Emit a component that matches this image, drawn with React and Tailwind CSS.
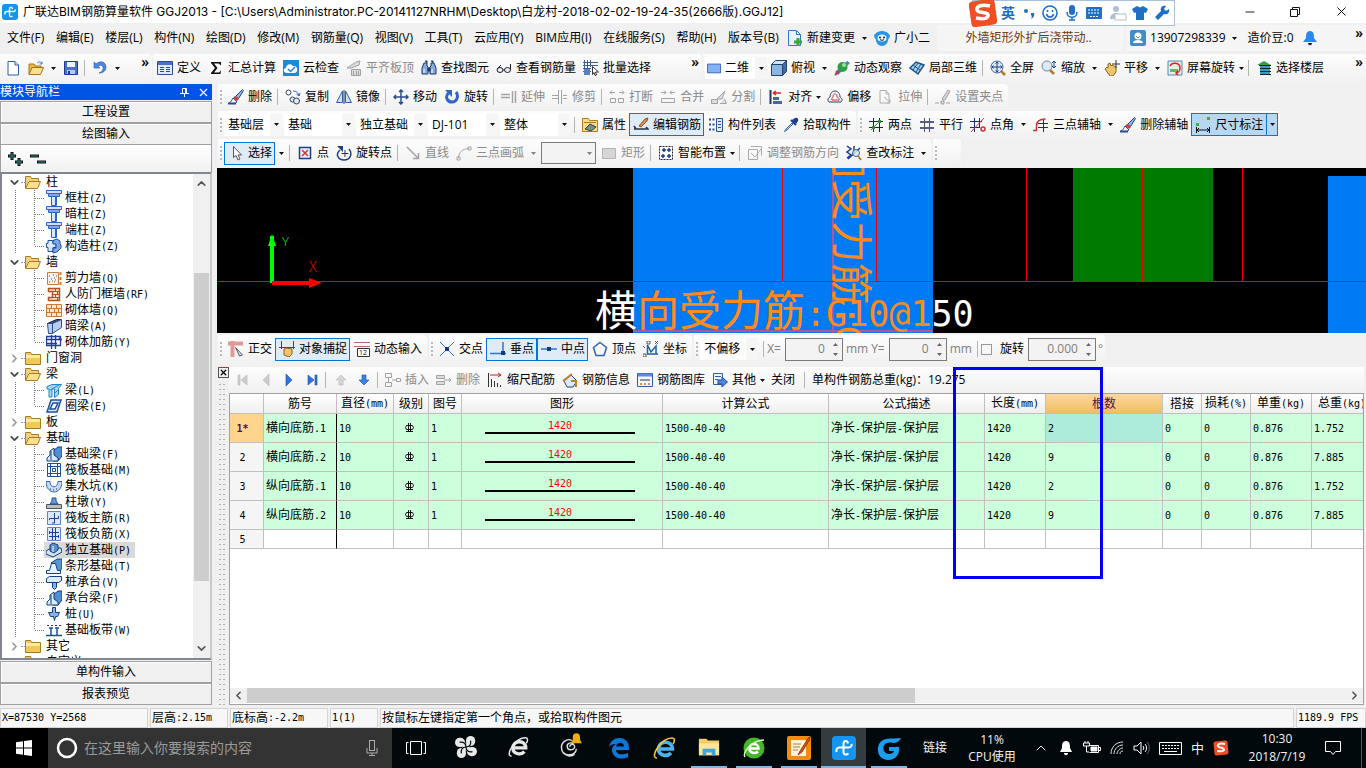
import clsx from "clsx";
import {
  ChevronDown,
  ChevronLeft,
  ChevronRight,
  ChevronUp,
  Minus,
  X,
} from "lucide-react";

const UI = "font-['Open_Sans','Noto_Sans_CJK_SC',sans-serif]";

/* ---------- Icons, all on a 16 x 16 grid ---------- */

const column = (
  <>
    <path d="M.500.500h15v3H.500z" fill="#cfe0fb" stroke="#2f62c4" />
    <path d="M2.500 3.500h11v3h-11z" fill="#7ea6ec" stroke="#2f62c4" />
    <path d="M5.500 6.500h5v9h-5z" fill="#dbe8fd" stroke="#2f62c4" />
    <path d="M9 7h2v8H9z" fill="#2f62c4" />
  </>
);
const beamFoot = (
  <>
    <path d="M7 5l5-4h4v9l-4 5H7z" fill="#4f8fd0" stroke="#123f80" />
    <path d="M1 15v-3l3-3V5l4-3v7l4 3v3z" fill="#dcebfb" stroke="#123f80" />
    <path d="M5 5v9" stroke="#123f80" />
  </>
);
const brush = (
  <>
    <path d="M14.500.500l1 1-5 8-3-2z" fill="#8fb8ea" stroke="#23406f" />
    <path d="M7 7l4 3-2 2-4-3z" fill="#d23b2f" />
    <path d="M1 14c2-1 3-3 4-5l4 4c-2 2-5 2-8 1z" fill="#f4f8ff" stroke="#2b4f8f" />
    <path d="M0 14.500h8" stroke="#2b4f8f" strokeWidth="2" />
  </>
);

const icons = {
  logo: (
    <>
      <rect width="16" height="16" rx="3" fill="#1595f2" />
      <path d="M10.500 5C10 2.500 7.500 2.500 7.500 5v6c0 2 2 2 3 1M3 10.500C2.500 8 3.500 7.500 5 7.500h6.500c1.500 0 2-1 1.500-2" fill="none" stroke="#fff" strokeWidth="1.400" />
    </>
  ),
  file: (
    <>
      <path d="M3 1.500h7l3.500 3.500v10H3z" fill="#fff" stroke="#33609f" />
      <path d="M10 1.500V5h3.500" fill="#cfe0f5" stroke="#33609f" />
    </>
  ),
  open: (
    <>
      <path d="M1 14V4h5l1 2h6v3" fill="#e9b64a" stroke="#a8741a" />
      <path d="M1 14.500l3-7h11.500l-3 7z" fill="#ffdf87" stroke="#a8741a" />
      <path d="M9 3c2-2 4-1 5 1m0 0V1.500M14 4h-2.500" fill="none" stroke="#4c78b8" />
    </>
  ),
  save: (
    <>
      <path d="M1.500 1.500h13v13h-13z" fill="#4b6fd6" stroke="#1d3a9a" />
      <path d="M4 2h8v5H4z" fill="#eaf1ff" />
      <path d="M4 10h8v4H4z" fill="#b9c9ee" />
      <path d="M5 11h2v3H5z" fill="#1d3a9a" />
    </>
  ),
  undo: <path d="M2 2v6h6L6 6c3-2 6 0 5 3-.5 2-2 3-4 4 4 0 7-2 7-6 0-5-6-7-10-3z" fill="#4f86dc" stroke="#2458aa" strokeWidth=".6" />,
  define: (
    <>
      <path d="M.500 1.500h15v13H.500z" fill="#dfe9f8" stroke="#2c4f94" />
      <path d="M1 2h14v3H1z" fill="#4a74c4" />
      <path d="M3 7.500h4M3 9.500h4M3 11.500h4M9 7.500h4M9 9.500h4M9 11.500h4" stroke="#2c4f94" />
    </>
  ),
  sigma: <path d="M3 2h10v3h-1c0-1-1-1.500-2-1.500H6L9.500 8 6 12.500h4c1.500 0 2-.5 2.500-2H13L12.500 14H3v-1l4-5-4-5z" fill="#111" />,
  cloud: (
    <>
      <rect width="16" height="16" fill="#1b8ad8" />
      <path d="M4 13c-4 0-4-5-1-5 0-4 5-5 7-2 5-1 6 7 1 7z" fill="#fff" />
      <path d="M5 9l2.500 2.500L12 7" fill="none" stroke="#1b8ad8" strokeWidth="1.500" />
    </>
  ),
  flatTop: (
    <>
      <path d="M1 8l9-6 4-1-1 4-8 3zM5.500 9.500h9v6h-9z" fill="#dcdcdc" stroke="#a0a0a0" />
      <path d="M7.500 15v-4M10.500 15v-4M12.500 15v-4" stroke="#a0a0a0" />
    </>
  ),
  binoculars: (
    <>
      <path d="M3 3h3v3l1 1v7H1V8zM13 3h-3v3L9 7v7h6V8z" fill="#8aabde" stroke="#1d3666" />
      <path d="M7 8h2v3H7zM4 1h2v2M10 1h2v2" fill="#1d3666" stroke="#1d3666" />
      <path d="M3 9v4M11 9v4" stroke="#fff" />
    </>
  ),
  glasses: (
    <>
      <ellipse cx="4" cy="10" rx="3" ry="2.500" fill="#e6eefb" stroke="#222" />
      <ellipse cx="11.500" cy="10" rx="3" ry="2.500" fill="#e6eefb" stroke="#222" />
      <path d="M7 10h1.500M1 9l4-4M14.500 9V4" stroke="#222" fill="none" />
    </>
  ),
  batch: (
    <>
      <path d="M1.500 0v15M4.500 0v15M7.500 0v7M0 2.500h15M0 5.500h15M0 8.500h8M0 11.500h8" stroke="#3b5f9e" />
      <path d="M1 9h6v6H1z" fill="#5b7fc0" />
      <path d="M9.500 6.500l6 5.500h-3l1 3-1.500.5-1-3-1.500 2z" fill="#fff" stroke="#333" />
    </>
  ),
  rect2d: <path d="M.500 3.500h15v10H.500z" fill="#86b1f5" stroke="#2f5fae" />,
  cube: (
    <>
      <path d="M.500 4.500l4-4h11l-4 4z" fill="#cfe3f8" stroke="#1f4472" />
      <path d="M11.500 4.500l4-4v11l-4 4z" fill="#3b6ea5" stroke="#1f4472" />
      <path d="M.500 4.500h11v11H.500z" fill="#8cb6df" stroke="#1f4472" />
    </>
  ),
  orbit: (
    <>
      <path d="M1 12L13 1l3 2L4 15z" fill="#4b7fc7" />
      <circle cx="8.500" cy="7" r="5" fill="#2e9e45" />
      <circle cx="10" cy="5" r="2" fill="#9fe0a4" />
      <path d="M1 15l4-4" stroke="#c33" strokeWidth="2" />
    </>
  ),
  part3d: (
    <>
      <path d="M1 8l6-6 8 3-6 9z" fill="#a8cce8" stroke="#1f5486" strokeWidth="1.500" />
      <path d="M4 5l7 5M9 3l-5 7M12 4l-5 8" stroke="#1f5486" />
    </>
  ),
  zoomAll: (
    <>
      <path d="M11 11l4 4" stroke="#b37a2a" strokeWidth="2.500" />
      <circle cx="7" cy="7" r="6" fill="#dceafa" stroke="#3f5f8f" />
      <path d="M7 2v10M2 7h10M5.500 3.500L7 2l1.500 1.500M5.500 10.500L7 12l1.500-1.500M3.500 5.500L2 7l1.500 1.500M10.500 5.500L12 7l-1.500 1.500" fill="none" stroke="#1f3f8f" />
    </>
  ),
  zoom: (
    <>
      <path d="M9 10l4 4" stroke="#b37a2a" strokeWidth="2.500" />
      <circle cx="6" cy="6" r="5" fill="#dceafa" stroke="#6a88ad" />
      <path d="M13 1v7M11 3l2-2 2 2M11 6l2 2 2-2" fill="none" stroke="#1f3f8f" />
    </>
  ),
  pan: (
    <>
      <path d="M1 9l2-2 1 1V4l2-1 1 3 1-1 2 1 2 1v5l-3 4H6z" fill="#f0c468" stroke="#8d6420" />
      <path d="M12 0v8M8 4h8" stroke="#333" />
    </>
  ),
  screenRotate: (
    <>
      <path d="M1 1h14v14H1z" fill="#e3f0e2" stroke="#5588bb" />
      <path d="M3 9h8v3H3z" fill="#6cb46c" />
      <path d="M3 6c2-4 10-4 10 2 0 3-2 5-4 5M11 11l-2 2 2 2" fill="none" stroke="#d22" strokeWidth="1.500" />
    </>
  ),
  floors: (
    <>
      <path d="M1 5l7-4 7 4z" fill="#3a9a4a" />
      <path d="M3 5.500h12M4 8.500h11M4 11.500h11M4 14.500h11" stroke="#222" />
      <path d="M4 7h10M4 10h10M4 13h10" stroke="#3f9ac0" strokeWidth="2" />
    </>
  ),
  brush,
  copy: (
    <>
      <circle cx="3.500" cy="3.500" r="2.500" fill="#fff" stroke="#345" />
      <circle cx="7.500" cy="10.500" r="2.500" fill="#dfe9f8" stroke="#345" />
      <circle cx="11.500" cy="12" r="3" fill="#dfe9f8" stroke="#345" />
      <path d="M8 2c3 0 5 1 6 5M11.500 5l2.500 2 1-3" fill="none" stroke="#2f5fae" />
    </>
  ),
  mirror: (
    <>
      <path d="M6.500 2v11.500h-6zM9.500 2v11.500h6z" fill="#cfe0f5" stroke="#2f5fae" />
      <path d="M8 1v14" stroke="#234" />
    </>
  ),
  move: <path d="M8 1v14M1 8h14M6 3l2-2 2 2M6 13l2 2 2-2M3 6L1 8l2 2M13 6l2 2-2 2" fill="none" stroke="#2b4f8f" strokeWidth="1.500" />,
  rotate: (
    <>
      <path d="M4.500 4c-4 4-1 9 3.500 9 5 0 7-6 4-10" fill="none" stroke="#2f66c8" strokeWidth="3" />
      <path d="M1 1h7v7z" fill="#2f66c8" />
    </>
  ),
  extend: <path d="M0 5.500h9M0 8.500h9M11.500 2v12M14.500 2v12" fill="none" stroke="#a3a3a3" strokeWidth="1.500" />,
  trim: <path d="M0 6.500h6M0 9.500h6M6.500 1v14M9.500 1v14M11 6.500h4M11 9.500h4" fill="none" stroke="#a3a3a3" />,
  split: <path d="M1 3.500h5M3 1.500l-2 2 2 2M10 3.500h5M13 1.500l2 2-2 2M1.500 9.500h5v4h-5zM9.500 9.500h5v4h-5z" fill="none" stroke="#a3a3a3" />,
  merge: <path d="M1 3.500h5M4 1.500l2 2-2 2M15 3.500h-5M12 1.500l-2 2 2 2M1.500 9.500h13v4h-13z" fill="none" stroke="#a3a3a3" />,
  divide: <path d="M.500 14.500h6v-4h-6zM9 14.500h6.500l-2-5M6 10l8-8-3 8z" fill="#ddd" stroke="#a3a3a3" />,
  align: (
    <>
      <path d="M2.500 1v14" stroke="#1d3666" strokeWidth="2" />
      <path d="M5 8h6v3H5zM5 12h9v3H5z" fill="#3f66b0" />
      <path d="M13 4H5m0 0l3-2M5 4l3 2" stroke="#d22" fill="none" strokeWidth="1.500" />
    </>
  ),
  offset: (
    <>
      <path d="M2 13c-2-2-1-4 1-5 0-8 10-8 10 0 2 1 3 3 1 5z" fill="#e9eef6" stroke="#345" />
      <path d="M5 11c-1-2 1-2 1-3 0-4 4-4 4 0 0 1 3 1 2 3z" fill="#fff" stroke="#c33" />
    </>
  ),
  stretch: <path d="M2 1.500h6L11 5v9H2zM8 1v4h3M6 8l6 5M12 10v4H9" fill="none" stroke="#b0b0b0" />,
  grip: <path d="M7 10l6-9 2 1-5 9zM0 14h4M6 12h3v3H6zM11 14h4" fill="#d6d6d6" stroke="#a3a3a3" />,
  property: (
    <>
      <path d="M.500 1.500h6l1 2h8v11H.500z" fill="#ffdd85" stroke="#b57a1f" />
      <path d="M2 5.500h12" stroke="#b57a1f" />
      <path d="M3 12l5-5 6 3-5 4z" fill="#7f8f7a" stroke="#23406f" />
    </>
  ),
  editBar: (
    <>
      <path d="M15 1l-3 1-6 7 2 1 6-6z" fill="#e58a4a" stroke="#6b3a1a" strokeWidth=".8" />
      <path d="M1 9l2 3h12l-2-2M1 12h5" fill="none" stroke="#234" strokeWidth="1.500" />
    </>
  ),
  list: (
    <>
      <path d="M1 2.500h2M1 7.500h2M1 12.500h2M4.500 2.500h2M4.500 7.500h2M4.500 12.500h2" stroke="#2b4f8f" strokeWidth="2" />
      <path d="M8.500 1.500h6v13h-6z" fill="#dfe9f8" stroke="#2b4f8f" />
      <path d="M10 4.500h3M10 7.500h3M10 10.500h3" stroke="#2b4f8f" />
    </>
  ),
  picker: (
    <>
      <path d="M9 3l3-2c2-1 4 1 3 3l-2 3z" fill="#1d3f8a" />
      <path d="M8 3l5 5" stroke="#1d3f8a" strokeWidth="2" />
      <path d="M10 7l-6 6-2.500 1.500L3 12l6-6z" fill="#b9d2f2" stroke="#3b66ad" />
    </>
  ),
  axis2: (
    <>
      <path d="M1 4.500h14M1 10.500h14M5.500 1v14M11.500 1v14" stroke="#223" />
      <path d="M3 13L13 3" stroke="#2e8b3a" />
      <path d="M4 9h3v3H4zM10 3h3v3h-3z" fill="#2e8b3a" />
    </>
  ),
  parallel: (
    <>
      <path d="M1 5h14M1 11h14" stroke="#1e2e74" strokeWidth="1.500" />
      <path d="M5.500 1v14M10.500 1v14" stroke="#555" />
    </>
  ),
  pointAngle: (
    <>
      <path d="M0 4.500h12M0 10.500h10M4.500 1v14M9.500 1v10" stroke="#1e2e74" />
      <path d="M1 15L14 1" stroke="#c33" />
      <circle cx="13" cy="12" r="2" fill="none" stroke="#c33" strokeWidth="1.500" />
    </>
  ),
  axis3: (
    <>
      <path d="M5 6.500h10M5 10.500h10M10.500 3v12" stroke="#1e2e74" />
      <path d="M0 13.500h3.500V9c0-4 3-7 9-7" fill="none" stroke="#c33" strokeWidth="1.500" />
    </>
  ),
  dimension: (
    <>
      <path d="M1 6h3v3H1zM12 0h3v3h-3z" fill="#3fae49" />
      <path d="M1.500 10v6M14.500 10v6M2 13h12M4 11l-2 2 2 2M12 11l2 2-2 2" stroke="#111" fill="none" />
    </>
  ),
  cursor: <path d="M5.500 1.500v11l2.500-2 2 4.500 2-1-2-4h3.500z" fill="#fff" stroke="#555" />,
  point: (
    <>
      <path d="M2.500 2.500h11v11h-11z" fill="#eef3fb" stroke="#1d3f8a" strokeWidth="1.500" />
      <path d="M5 5l6 6M11 5l-6 6" stroke="#c33" strokeWidth="1.500" />
    </>
  ),
  rotPoint: (
    <>
      <path d="M4 5c-5 4-2 10 4 10s9-6 5-11" fill="none" stroke="#1d3f8a" strokeWidth="1.500" />
      <path d="M1 1h6v6z" fill="#1d3f8a" />
      <path d="M9 5v7M5.500 8.500h7" stroke="#333" />
    </>
  ),
  line: <path d="M2 2l11 11M13.500 8v5.500H8" fill="none" stroke="#a3a3a3" strokeWidth="1.500" />,
  arc: <path d="M2.500 13C3 7 6 4 13 3.500M1 12h3v3H1zM12 2h3v3h-3z" fill="none" stroke="#a3a3a3" />,
  rectangle: <path d="M1.500 3.500h13v10h-13z" fill="#d6d6d6" stroke="#b5b5b5" />,
  smart: (
    <>
      <path d="M1.500 1.500h13v13h-13z" fill="#fff" stroke="#223" strokeDasharray="2 1" />
      <path d="M6 3v4M4 5h4M11 3v4M9 5h4M5 9v4M3 11h4M11 9v4M9 11h4" stroke="#1d3f8a" strokeWidth="1.500" />
    </>
  ),
  adjust: <path d="M1.500 4.500h9v10h-9zM4 1.500h10.500v9M4 8l4 4 6-8" fill="none" stroke="#ababab" />,
  checkDim: (
    <>
      <path d="M1 1l4 3-4 3 4 3-4 3M8 1v8M2 14l12-11" fill="none" stroke="#1d3f8a" strokeWidth="1.500" />
      <circle cx="10" cy="8" r="3.500" fill="#dceafa" fillOpacity=".8" stroke="#3f5f8f" />
      <path d="M12 11l3 4" stroke="#b37a2a" strokeWidth="2" />
    </>
  ),
  ortho: (
    <>
      <path d="M0 2.500h15M4.500 0v16" stroke="#dd9a98" strokeWidth="4" />
      <path d="M7.500 6.500l7 7.500-3 1z" fill="#dfe6f2" stroke="#556" />
    </>
  ),
  snap: (
    <>
      <path d="M2.500 0v8M14.500 0v8M0 6.500h16" stroke="#7a3030" />
      <path d="M5 8l2-1 6 1v5l-3 3-5-2z" fill="#f0c468" stroke="#8d6420" />
    </>
  ),
  dynInput: (
    <>
      <path d="M0 1.500h16M0 5.500h16" stroke="#b86b6b" />
      <path d="M3.500 7.500h12v8h-12z" fill="#fff" stroke="#333" />
      <text x="5" y="14" fontSize="7" fill="#111">12</text>
    </>
  ),
  cross: (
    <>
      <path d="M1 1l14 14M15 1L1 15" stroke="#2f77c8" />
      <path d="M6 6h4v4H6z" fill="#123a86" />
    </>
  ),
  perp: (
    <>
      <path d="M13 1v11M0 12.500h16" stroke="#2f77c8" strokeWidth="1.500" />
      <path d="M11 10h4v4h-4z" fill="#123a86" />
    </>
  ),
  mid: (
    <>
      <path d="M0 8h16" stroke="#2f77c8" strokeWidth="1.500" />
      <path d="M6 6h4v4H6z" fill="#123a86" />
    </>
  ),
  vertex: <path d="M8 1.500l6.500 5-2.500 8H4l-2.500-8z" fill="none" stroke="#2f66b0" strokeWidth="1.500" />,
  coord: (
    <>
      <path d="M4.500 4v9H15M5 5l3 6 5-6v8" fill="none" stroke="#1d5fa8" strokeWidth="1.500" />
      <path d="M4 0h3v3H4zM12 0l3 3M15 0l-3 3M0 5l2 2M0 13h3v3H0z" fill="none" stroke="#333" strokeWidth=".8" />
    </>
  ),
  insert: <path d="M.500 1.500h6v4h-6zM.500 10.500h6v4h-6zM3.500 6v4M7 8h5M11.500 6.500h4v3h-4z" fill="none" stroke="#a3a3a3" />,
  remove: <path d="M.500 3.500h8v3h-8zM.500 9.500h8v3h-8zM8 8h7m0 0l-2-2m2 2l-2 2" fill="#ddd" stroke="#a3a3a3" />,
  scaleBar: (
    <>
      <path d="M1.500 1v14M4.500 7v8M7.500 9v6M10.500 11v4M13.500 13v2" stroke="#333" />
      <path d="M3 3h11m0 0l-3-2m3 2l-3 2" stroke="#b22" fill="none" />
    </>
  ),
  barInfo: (
    <>
      <path d="M2 9l7-6 6 6-4 6H5z" fill="#dfe9f8" stroke="#23406f" />
      <path d="M1 9l9-7M9 9h5v6" stroke="#b9822c" strokeWidth="2" fill="none" />
    </>
  ),
  barLib: (
    <>
      <path d="M.500 1.500h15v13H.500z" fill="#f1f6fd" stroke="#2c5fa8" />
      <path d="M1 3h14" stroke="#5b8fd6" strokeWidth="3" />
      <path d="M3 8h10" stroke="#333" />
      <path d="M3 12h10" stroke="#c93" strokeWidth="2" strokeDasharray="2 2" />
    </>
  ),
  other: (
    <>
      <path d="M1.500 1.500h9v11h-9z" fill="#eef3fb" stroke="#2c5fa8" />
      <path d="M3 4.500h6M3 7.500h3" stroke="#2c5fa8" />
      <path d="M6 8h4V5l5.500 5-5.500 5v-3H6z" fill="#4f86dc" stroke="#1d4f9a" />
    </>
  ),
  first: <path d="M3 3h2v10H3zM12 3v10L6 8z" fill="#cdcdcd" stroke="#b5b5b5" strokeWidth=".6" />,
  prev: <path d="M11 2v12L5 8z" fill="#cdcdcd" stroke="#b5b5b5" strokeWidth=".6" />,
  next: <path d="M5 2v12l6-6z" fill="#2f74e0" stroke="#1d4f9a" strokeWidth=".6" />,
  last: <path d="M4 3v10l6-5zM11 3h2v10h-2z" fill="#2f74e0" stroke="#1d4f9a" strokeWidth=".6" />,
  up: <path d="M8 3l5 5h-3v5H6V8H3z" fill="#d6d6d6" stroke="#b5b5b5" strokeWidth=".6" />,
  down: <path d="M8 13L3 8h3V3h4v5h3z" fill="#3f7fe6" stroke="#1d4f9a" strokeWidth=".6" />,
  change: (
    <>
      <path d="M1.500.500h8l4 4v11h-12z" fill="#e9f3ff" stroke="#2f77c8" />
      <path d="M9.500 1v3.500H13" fill="none" stroke="#2f77c8" />
      <path d="M11 8v8M7 12h8" stroke="#3ca63c" strokeWidth="3" />
    </>
  ),
  mascot: (
    <>
      <path d="M8 1c6 0 7 4 8 4 0 3-2 4-2 5 0 3-3 6-6 6s-6-3-6-6C2 9 0 8 0 5c1 0 2-4 8-4z" fill="#2a93e8" />
      <ellipse cx="8" cy="8" rx="4.500" ry="3.500" fill="#e6f4ff" />
      <circle cx="6" cy="7.500" r="1" fill="#124" />
      <circle cx="10" cy="7.500" r="1" fill="#124" />
      <path d="M6 9.500c1 1 3 1 4 0" fill="none" stroke="#124" />
    </>
  ),
  user: (
    <>
      <rect width="16" height="16" rx="2" fill="#3f8fc6" />
      <circle cx="8" cy="6" r="3.500" fill="#fff" />
      <path d="M3 13c0-4 10-4 10 0z" fill="#fff" />
      <path d="M6 6l2 2 2-2" stroke="#3f8fc6" fill="none" />
    </>
  ),
  bell: (
    <>
      <path d="M8 1c4 0 4 4 4 7l3 4H1l3-4c0-3 0-7 4-7z" fill="#2b88f0" />
      <path d="M6 13h4c0 3-4 3-4 0z" fill="#123" />
    </>
  ),
  // navigation tree
  folder: (
    <>
      <path d="M.500 2.500h5l1 2h9v10H.500z" fill="#f3c75a" stroke="#a87c22" />
      <path d="M1 6.500h14" stroke="#ffe9a8" strokeWidth="3" />
    </>
  ),
  folderOpen: (
    <>
      <path d="M.500 14V2.500h5l1 2h7V8" fill="#f0d078" stroke="#a87c22" />
      <path d="M.500 14.500L4 7.500h11.500l-3 7z" fill="#ffe08a" stroke="#a87c22" />
    </>
  ),
  column,
  structColumn: (
    <>
      <path d="M2 2.500h5v3h3v4H7v4H2v-4H.500v-4H2z" fill="#dbe8fd" stroke="#1d4fa0" />
      <path d="M7 2.500L11 1l3 2v3l1 1v3l-4 4-4 1v-5h3v-4H7z" fill="#7ea6ec" stroke="#1d4fa0" />
    </>
  ),
  shearWall: (
    <>
      <path d="M1.500 2.500h11v12h-11z" fill="#f6f1ec" stroke="#c97a3a" />
      <path d="M3 6h1M7 5h1M5 9h1M9 10h1M3 12h1M8 12h1M10 6h1M6 11h1M8 8h1" stroke="#555" />
      <path d="M14.500 2v3M14.500 7v3M14.500 12v3" stroke="#c97a3a" strokeWidth="2" />
    </>
  ),
  doorWall: (
    <>
      <path d="M2.500 2.500h11v12h-11v-3h4v-6h-4z" fill="#fbe3cf" stroke="#b4521f" strokeWidth="1.500" />
      <path d="M7 5.500h6M7 8.500h6M7 11.500h6M9.500 3v2M11.500 6v2M9.500 9v2M11.500 12v2" stroke="#b4521f" />
    </>
  ),
  brick: (
    <>
      <path d="M.500 2.500h15v12H.500z" fill="#fce6d2" stroke="#c97a3a" />
      <path d="M1 6.500h14M1 10.500h14M5.500 3v3M10.500 3v3M3.500 7v3M8.500 7v3M12.500 7v3M5.500 11v3M10.500 11v3" stroke="#c97a3a" />
    </>
  ),
  hiddenBeam: (
    <>
      <path d="M1.500 5.500l9-4h5l-9 4z" fill="#36527c" stroke="#223" />
      <path d="M1.500 5.500h5v10h-4zM6.500 5.500l9-4v8l-9 6z" fill="#b9cdec" stroke="#2c4f94" />
    </>
  ),
  brickBar: <path d="M0 5.500h16M0 9.500h11M5.500 1v14M9.500 1v14M.500 2.500h14v9H.500zM12 6l3-3" fill="none" stroke="#1d3f9a" strokeWidth="1.300" />,
  beam: (
    <>
      <path d="M1 4.500l5-2h9.500l-3 4v6l-4 3V7H6v8H3V7H1z" fill="#a8d4f5" stroke="#2186c8" />
      <path d="M4 8l9-5M8 12l5-5" stroke="#2186c8" />
    </>
  ),
  ringBeam: <path d="M5 2h10l-4 12H1zM7 5h5l-3 6H4z" fill="#dbe8fb" fillRule="evenodd" stroke="#1d4fa0" strokeWidth="1.500" />,
  beamFoot,
  raft: <path d="M1.500 1.500h13v13h-13zM4.500 1v14M11.500 1v14M1 4.500h14M1 11.500h14M6.500 6.500h3v3h-3z" fill="none" stroke="#1d4fa0" />,
  pit: (
    <>
      <path d="M0 3.500h4c0 7 8 7 8 0h4c0 14-16 14-16 0z" fill="#c5dbf7" stroke="#2f66b8" />
      <path d="M4 11h1M7 12h1M10 11h1" stroke="#123" />
    </>
  ),
  pier: (
    <>
      <path d="M.500 10.500h15v4H.500z" fill="#b9bec3" stroke="#555" />
      <path d="M4 10l2-3V4h4v3l2 3z" fill="#6f97dd" stroke="#1d4fa0" />
    </>
  ),
  raftMain: (
    <>
      <path d="M1.500 1.500h13v13h-13z" fill="#dbe8fb" stroke="#5b86cf" />
      <path d="M8.500 3v10H6M3.500 10V8.500h9V6" fill="none" stroke="#1d3f9a" />
    </>
  ),
  raftNeg: (
    <>
      <path d="M1.500 1.500h13v13h-13z" fill="#dbe8fb" stroke="#5b86cf" />
      <path d="M6.500 2v12M9.500 2v12M3 6.500h10M3 10.500h10M3.500 5v3M12.500 9v3" stroke="#1d3f9a" />
    </>
  ),
  footing: (
    <>
      <path d="M0 9l5-3 10 0 1 4-9 5-7-3z" fill="#cfe3f8" stroke="#123f80" />
      <path d="M4 9V3l3-2 5 2v5l-4 3z" fill="#5d8fcb" stroke="#123f80" />
      <path d="M7 4v6" stroke="#fff" />
    </>
  ),
  strip: (
    <>
      <path d="M5 5l6-4h5v9l-3 5z" fill="#5d94cf" stroke="#123f80" />
      <path d="M.500 15.500v-3h3l2-7h4l2 7h3v3z" fill="#e9f2fc" stroke="#123f80" />
    </>
  ),
  pileCap: (
    <>
      <path d="M6.500 8.500h4v5l-2 2-2-2z" fill="#7fb2e8" stroke="#123f80" />
      <path d="M.500 4.500l3-2h12v4l-3 2H.500z" fill="#dcebfb" stroke="#123f80" />
    </>
  ),
  pile: <path d="M6.500 1.500h3v5h4l-2 4h-2l-1 4-1-4h-3l-2-4h4z" fill="#8db4e6" stroke="#123f80" />,
  band: (
    <>
      <path d="M1 3.500h14" stroke="#333" strokeDasharray="2 2" />
      <path d="M0 13.500h16M5 6v7M11 6v7M3 6h4M9 6h4" stroke="#1d4fa0" strokeWidth="1.500" />
    </>
  ),
};

function Icon({ name, className = "h-4 w-4" }) {
  return (
    <svg viewBox="0 0 16 16" className={clsx("shrink-0", className)} aria-hidden="true">
      {icons[name]}
    </svg>
  );
}

/* ---------- Toolbar parts ---------- */

function Caret({ dim }) {
  return (
    <svg viewBox="0 0 5 3" className={clsx("h-[3px] w-[5px] shrink-0", dim && "opacity-50")} aria-hidden="true">
      <path d="M0 0h5L2.500 3z" fill="#111" />
    </svg>
  );
}

const Sep = () => <span className="mx-[2px] h-4 w-[2px] shrink-0 border-l border-[#b4b4b4]" />;

const Grip = () => (
  <span className="flex w-1.5 shrink-0 flex-col items-center gap-[2px] self-center">
    {[0, 1, 2, 3].map((i) => (
      <i key={i} className="h-[2px] w-[2px] bg-[#b8b8b8]" />
    ))}
  </span>
);

const More = () => (
  <button type="button" aria-label="More" className="ml-auto self-start pr-px text-[14px] leading-4 font-semibold">
    »
  </button>
);

function Bar({ children, className, grip = true }) {
  return (
    <div
      className={clsx(
        "flex h-full shrink-0 items-center rounded-r bg-gradient-to-b from-[#fdfdfd] to-[#f1f1f1] pr-0.5",
        className
      )}
    >
      {grip && <Grip />}
      {children}
    </div>
  );
}

/* caret: "split" has its own button, "menu" belongs to the label */
function Tool({ icon, label, active, disabled, caret }) {
  return (
    <>
      <button
        type="button"
        disabled={disabled}
        className={clsx(
          "flex h-[23px] shrink-0 items-center gap-1 pr-[3px] pl-1 whitespace-nowrap",
          active && "bg-[#dfebf6] outline -outline-offset-1 outline-[#0078d7]",
          disabled && "text-[#8a8a8a]"
        )}
      >
        {icon && <Icon name={icon} />}
        <span>{label}</span>
        {caret === "menu" && (
          <span className="flex w-1 justify-center">
            <Caret />
          </span>
        )}
      </button>
      {caret === "split" && (
        <button
          type="button"
          disabled={disabled}
          aria-label={`${label} options`}
          className="flex h-[23px] w-3 shrink-0 items-center justify-center"
        >
          <Caret dim={disabled} />
        </button>
      )}
    </>
  );
}

function Combo({ label, value, className, boxed, icon }) {
  return (
    <div
      className={clsx(
        "relative flex h-[22px] shrink-0 items-center",
        boxed ? "border border-[#7a7a7a] bg-[#f3f3f3]" : "bg-white",
        className
      )}
    >
      {icon && <Icon name={icon} className="ml-[2px] h-4 w-3.5" />}
      <select aria-label={label} className="h-full w-full min-w-0 appearance-none bg-transparent pl-1 outline-none">
        <option>{value}</option>
      </select>
      <span
        className={clsx(
          "pointer-events-none absolute top-0 right-0 flex h-full w-3 items-center justify-center",
          !boxed && "bg-[#f6f6f6]"
        )}
      >
        <Caret dim={boxed} />
      </span>
    </div>
  );
}

function Spin({ label, value, className }) {
  return (
    <div className={clsx("flex h-[23px] shrink-0 items-center border border-[#7a7a7a] bg-[#f3f3f3] pr-1", className)}>
      <input
        aria-label={label}
        defaultValue={value}
        className="w-full min-w-0 bg-transparent pr-2 text-right text-[#808080] outline-none"
      />
      <svg viewBox="0 0 5 15" className="h-[15px] w-[5px] shrink-0" aria-hidden="true">
        <path d="M0 4h5L2.500 1zM0 11h5l-2.500 3z" fill="#666" />
      </svg>
    </div>
  );
}

/* Latin characters take half the width of a Chinese one in panels and grids */
function Fixed({ children }) {
  return String(children)
    .split(/([\x20-\x7e]+)/)
    .filter(Boolean)
    .map((part, i) =>
      /^[\x20-\x7e]/.test(part) ? (
        <span key={i} className="font-['DejaVu_Sans_Mono',monospace] text-[10px] whitespace-pre">
          {part}
        </span>
      ) : (
        part
      )
    );
}

/* ---------- Title and menu ---------- */

function TitleBar() {
  return (
    <header className="flex h-[23px] shrink-0 items-center bg-white pl-0.5">
      <Icon name="logo" />
      <h1 className="ml-[5px] font-['Inter','Noto_Sans_CJK_SC',sans-serif] whitespace-nowrap">
        广联达BIM钢筋算量软件 GGJ2013 - [C:\Users\Administrator.PC-20141127NRHM\Desktop\白龙村-2018-02-02-19-24-35(2666版).GGJ12]
      </h1>
      <div className="ml-auto flex h-full items-center">
        <button type="button" aria-label="Minimize" className="flex w-[45px] justify-center">
          <Minus size={14} strokeWidth={1.5} />
        </button>
        <button type="button" aria-label="Restore" className="flex w-[45px] justify-center">
          <svg viewBox="0 0 10 10" className="h-2.5 w-2.5" fill="none" stroke="#111">
            <path d="M.5 2.500h7v7h-7zM2.500 2.500v-2h7v7h-2" />
          </svg>
        </button>
        <button type="button" aria-label="Close" className="flex w-[49px] justify-center">
          <X size={15} strokeWidth={1.5} />
        </button>
      </div>
    </header>
  );
}

function InputMethodBar() {
  return (
    <div className="absolute top-0 right-[191px] flex h-[26px] w-[203px] items-center justify-between border border-[#a9bfdc] bg-white pr-1 pl-[28px] text-[#1f6fc4]">
      <svg viewBox="0 0 28 28" className="absolute -top-0.5 -left-1 h-7 w-7" aria-hidden="true">
        <rect x="1" y="1" width="26" height="26" rx="4" fill="#f04e23" transform="rotate(-8 14 14)" />
        <path d="M21 7C13 5 7 7 8 11c1 4 12 1 11 6-1 3-7 3-12 2" fill="none" stroke="#fff" strokeWidth="3.500" />
      </svg>
      <b className="text-[14px]">英</b>
      <svg viewBox="0 0 16 16" className="h-4 w-4">
        <circle cx="5" cy="6" r="2" fill="currentColor" />
        <path d="M10 8h3c1 3-1 5-3 6 1-2 1-3 0-4z" fill="currentColor" />
      </svg>
      <svg viewBox="0 0 16 16" className="h-4 w-4" fill="none" stroke="currentColor" strokeWidth="1.600">
        <circle cx="8" cy="8" r="7" />
        <path d="M4.500 9c1 4 6 4 7 0M5.500 5v2M10.500 5v2" />
      </svg>
      <svg viewBox="0 0 16 16" className="h-4 w-4">
        <rect x="5" y="0" width="6" height="10" rx="3" fill="currentColor" />
        <path d="M3 7c0 7 10 7 10 0M8 12v3M5 15h6" fill="none" stroke="currentColor" strokeWidth="1.500" />
      </svg>
      <svg viewBox="0 0 18 16" className="h-4 w-[18px]">
        <rect x="1" y="2" width="16" height="12" rx="1" fill="currentColor" />
        <path d="M3 5h12M3 8h12M5 11.500h8" stroke="#fff" strokeDasharray="2 1" />
      </svg>
      <svg viewBox="0 0 18 16" className="h-4 w-[18px] text-[#b0bfd2]">
        <circle cx="7" cy="4" r="3" fill="currentColor" />
        <path d="M1 14c0-8 12-8 12 0z" fill="currentColor" />
        <rect x="6" y="9" width="11" height="6" fill="#fff" stroke="currentColor" />
      </svg>
      <svg viewBox="0 0 16 16" className="h-4 w-4">
        <path d="M5 1l3 1.500L11 1l5 3-2 4-2-.5V15H4V7.500L2 8 0 4z" fill="currentColor" />
      </svg>
      <svg viewBox="0 0 16 16" className="h-4 w-4">
        <path d="M15 4l-3 2-2-2 2-3c-4-1-6 2-5 5l-6 6 3 3 6-6c3 1 6-1 5-5z" fill="currentColor" />
      </svg>
    </div>
  );
}

const menus = [
  "文件(F)", "编辑(E)", "楼层(L)", "构件(N)", "绘图(D)", "修改(M)", "钢筋量(Q)",
  "视图(V)", "工具(T)", "云应用(Y)", "BIM应用(I)", "在线服务(S)", "帮助(H)", "版本号(B)",
];

function MenuBar() {
  return (
    <nav className="flex h-[30px] shrink-0 items-center whitespace-nowrap">
      <div className="flex w-[783px] shrink-0 justify-between pr-1 pl-[7px]">
        {menus.map((m) => (
          <button key={m} type="button">
            {m}
          </button>
        ))}
      </div>
      <Tool icon="change" label="新建变更" caret="split" />
      <Tool icon="mascot" label="广小二" />
      <a href="#news" className="ml-1 flex h-[26px] w-[187px] items-center justify-center rounded bg-[#f5f5f5] pr-1 text-[#6b3a10]">
        外墙矩形外扩后浇带动..
      </a>
      <div className="ml-[2px] flex h-[26px] flex-1 items-center bg-[#f5f5f5] pr-0.5">
        <Tool icon="user" label="13907298339" caret="split" />
        <span className="ml-[7px]">造价豆:0</span>
        <button type="button" aria-label="Notifications" className="ml-2">
          <Icon name="bell" />
        </button>
        <More />
      </div>
    </nav>
  );
}

function MainToolbar() {
  return (
    <div className="flex h-[29px] shrink-0 items-center gap-[1px] pt-px">
      <Bar grip={false} className="w-[152px] pl-px">
        {["file", "open", "caret", "save", "sep", "undo", "caret"].map((n, i) => {
          if (n === "sep") return <Sep key={i} />;
          return (
            <button
              key={i}
              type="button"
              aria-label={n}
              className={clsx("flex h-[23px] shrink-0 items-center justify-center", n === "caret" ? "w-3" : "w-[23px]")}
            >
              {n === "caret" ? <Caret /> : <Icon name={n} />}
            </button>
          );
        })}
        <More />
      </Bar>
      <Bar grip={false} className="w-[549px]">
        <Tool icon="define" label="定义" />
        <Tool icon="sigma" label="汇总计算" />
        <Tool icon="cloud" label="云检查" />
        <Tool icon="flatTop" label="平齐板顶" disabled />
        <Tool icon="binoculars" label="查找图元" />
        <Tool icon="glasses" label="查看钢筋量" />
        <Tool icon="batch" label="批量选择" />
        <More />
      </Bar>
      <Bar grip={false} className="flex-1 pl-[2px]">
        <Combo label="View" icon="rect2d" value="二维" className="w-[62px]" />
        <Tool icon="cube" label="俯视" caret="split" />
        <Tool icon="orbit" label="动态观察" />
        <Tool icon="part3d" label="局部三维" />
        <Sep />
        <Tool icon="zoomAll" label="全屏" />
        <Tool icon="zoom" label="缩放" caret="split" />
        <Tool icon="pan" label="平移" caret="split" />
        <Tool icon="screenRotate" label="屏幕旋转" caret="menu" />
        <Sep />
        <Tool icon="floors" label="选择楼层" />
        <More />
      </Bar>
    </div>
  );
}

/* ---------- Left navigation ---------- */

const tree = [
  { label: "柱", open: true, items: [["框柱(Z)", "column"], ["暗柱(Z)", "column"], ["端柱(Z)", "column"], ["构造柱(Z)", "structColumn"]] },
  {
    label: "墙",
    open: true,
    items: [["剪力墙(Q)", "shearWall"], ["人防门框墙(RF)", "doorWall"], ["砌体墙(Q)", "brick"], ["暗梁(A)", "hiddenBeam"], ["砌体加筋(Y)", "brickBar"]],
  },
  { label: "门窗洞" },
  { label: "梁", open: true, items: [["梁(L)", "beam"], ["圈梁(E)", "ringBeam"]] },
  { label: "板" },
  {
    label: "基础",
    open: true,
    items: [
      ["基础梁(F)", "beamFoot"], ["筏板基础(M)", "raft"], ["集水坑(K)", "pit"], ["柱墩(Y)", "pier"],
      ["筏板主筋(R)", "raftMain"], ["筏板负筋(X)", "raftNeg"], ["独立基础(P)", "footing"], ["条形基础(T)", "strip"],
      ["桩承台(V)", "pileCap"], ["承台梁(F)", "beamFoot"], ["桩(U)", "pile"], ["基础板带(W)", "band"],
    ],
  },
  { label: "其它" },
  { label: "自定义" },
];
const selected = "独立基础(P)";

function TreeGroup({ group }) {
  const items = group.items || [];
  const Chevron = group.open ? ChevronDown : ChevronRight;
  return (
    <li>
      <button type="button" className="flex h-4 items-center pl-[5px]">
        <Chevron size={13} strokeWidth={3} className={group.open ? "text-[#444]" : "text-[#999]"} />
        <span className="w-1 border-b border-dotted border-[#999]" />
        <Icon name={group.open ? "folderOpen" : "folder"} />
        <span className="ml-[5px]">{group.label}</span>
      </button>
      <ul>
        {items.map(([label, icon], i) => (
          <li key={label} className="flex h-4 items-center">
            <svg viewBox="0 0 41 16" className="h-4 w-[41px] shrink-0" stroke="#777" strokeDasharray="1 1" aria-hidden="true">
              <path d={`M12.500 0v16M31.500 0v${i === items.length - 1 ? 8 : 16}M32 8.500h9`} />
            </svg>
            <button type="button" className={clsx("flex h-4 items-center pr-1 pl-0.5", label === selected && "bg-[#d9d9d9]")}>
              <Icon name={icon} />
              <span className="ml-[3px] leading-4">
                <Fixed>{label}</Fixed>
              </span>
            </button>
          </li>
        ))}
      </ul>
    </li>
  );
}

function PanelButton({ children }) {
  return (
    <button type="button" className="h-[22px] w-full shrink-0 border border-[#a0a0a0] bg-[#f0f0f0] shadow-[inset_1px_1px_0_#fff]">
      {children}
    </button>
  );
}

function Navigator() {
  return (
    <aside className="flex w-[212px] shrink-0 flex-col pb-[2px]">
      <div className="flex h-4 shrink-0 items-center bg-[#0054e3] text-white">
        <h2 className="text-[12px]">模块导航栏</h2>
        <button type="button" aria-label="Pin" className="mr-2 ml-auto">
          <svg viewBox="0 0 9 9" className="h-[9px] w-[9px]" fill="none" stroke="#fff">
            <path d="M2.500 5V.5h4V5M5.500 1v4M0 5.500h9M4.500 6v3" />
          </svg>
        </button>
        <button type="button" aria-label="Close panel" className="mr-[2px]">
          <X size={13} strokeWidth={2} />
        </button>
      </div>
      <div className="mt-px flex flex-col">
        <PanelButton>工程设置</PanelButton>
        <PanelButton>绘图输入</PanelButton>
      </div>
      <div className="flex h-[27px] shrink-0 items-center gap-1 border-x border-[#a0a0a0] bg-gradient-to-b from-white to-[#f1f1f1] pl-1.5">
        <button type="button" aria-label="Expand all">
          <svg viewBox="0 0 18 16" className="h-4 w-[18px]">
            <path d="M5 1v8M1 5h8M12 7v8M8 11h8" stroke="#111" strokeWidth="3" />
            <path d="M5 2v6M2 5h6M12 8v6M9 11h6" stroke="#1c8f7e" />
          </svg>
        </button>
        <button type="button" aria-label="Collapse all">
          <svg viewBox="0 0 18 16" className="h-4 w-[18px]">
            <path d="M1 5h9M8 11h9" stroke="#111" strokeWidth="3" />
            <path d="M2 5h7M9 11h7" stroke="#1c8f7e" />
          </svg>
        </button>
      </div>
      <div className="flex min-h-0 flex-1 border-2 border-[#82878f] border-r-[#c9c9c9] bg-white">
        <ul className="min-w-0 flex-1 overflow-hidden pl-px">
          {tree.map((g) => (
            <TreeGroup key={g.label} group={g} />
          ))}
        </ul>
        <div className="flex w-[17px] shrink-0 flex-col items-center bg-[#f0f0f0]">
          <ChevronUp size={13} strokeWidth={3} className="my-[3px] text-[#555]" />
          <div className="mt-20 h-[308px] w-[15px] bg-[#cdcdcd]" />
          <ChevronDown size={13} strokeWidth={3} className="mt-auto mb-[3px] text-[#555]" />
        </div>
      </div>
      <div className="mt-px flex flex-col">
        <PanelButton>单构件输入</PanelButton>
        <PanelButton>报表预览</PanelButton>
      </div>
    </aside>
  );
}

/* ---------- Drawing toolbars ---------- */

function EditToolbars() {
  return (
    <div className="flex shrink-0 flex-col pl-px">
      <div className="flex h-[26px] shrink-0">
        <Bar>
          <Tool icon="brush" label="删除" />
          <Sep />
          <Tool icon="copy" label="复制" />
          <Tool icon="mirror" label="镜像" />
          <Sep />
          <Tool icon="move" label="移动" />
          <Tool icon="rotate" label="旋转" />
          <Sep />
          <Tool icon="extend" label="延伸" disabled />
          <Tool icon="trim" label="修剪" disabled />
          <Sep />
          <Tool icon="split" label="打断" disabled />
          <Tool icon="merge" label="合并" disabled />
          <Tool icon="divide" label="分割" disabled />
          <Sep />
          <Tool icon="align" label="对齐" caret="menu" />
          <Tool icon="offset" label="偏移" />
          <Tool icon="stretch" label="拉伸" disabled />
          <Sep />
          <Tool icon="grip" label="设置夹点" disabled />
        </Bar>
      </div>
      <div className="flex h-7 shrink-0 gap-[2px] pt-px">
        <Bar>
          <Combo label="Floor" value="基础层" className="mr-[2px] w-[58px]" />
          <Combo label="Category" value="基础" className="mr-[2px] w-[70px]" />
          <Combo label="Type" value="独立基础" className="mr-[2px] w-[70px]" />
          <Combo label="Component" value="DJ-101" className="mr-[2px] w-[70px]" />
          <Combo label="Unit" value="整体" className="mr-[2px] w-[70px]" />
          <Sep />
          <Tool icon="property" label="属性" />
          <Tool icon="editBar" label="编辑钢筋" active />
          <Tool icon="list" label="构件列表" />
          <Tool icon="picker" label="拾取构件" />
        </Bar>
        <Bar>
          <Tool icon="axis2" label="两点" />
          <Tool icon="parallel" label="平行" />
          <Tool icon="pointAngle" label="点角" caret="split" />
          <Tool icon="axis3" label="三点辅轴" caret="split" />
          <Tool icon="brush" label="删除辅轴" />
          <div className="flex bg-[#b8d8f2] outline -outline-offset-1 outline-[#0078d7]">
            <button type="button" className="flex h-[23px] items-center gap-1 pr-[3px] pl-1">
              <Icon name="dimension" />
              <span>尺寸标注</span>
            </button>
            <button type="button" aria-label="尺寸标注 options" className="flex w-3 items-center justify-center border-l border-[#0078d7]">
              <Caret />
            </button>
          </div>
        </Bar>
      </div>
      <div className="flex h-[30px] shrink-0 gap-[2px] py-px">
        <Bar>
          <Tool icon="cursor" label="选择" active caret="split" />
          <Sep />
          <Tool icon="point" label="点" />
          <Tool icon="rotPoint" label="旋转点" />
          <Sep />
          <Tool icon="line" label="直线" disabled />
          <Tool icon="arc" label="三点画弧" disabled caret="split" />
          <Combo label="Radius" value="" boxed className="mr-px ml-0.5 w-[55px]" />
          <Tool icon="rectangle" label="矩形" disabled />
          <Sep />
          <Tool icon="smart" label="智能布置" caret="menu" />
          <Sep />
          <Tool icon="adjust" label="调整钢筋方向" disabled />
          <Tool icon="checkDim" label="查改标注" caret="split" />
        </Bar>
        <Bar className="w-7">{null}</Bar>
      </div>
    </div>
  );
}

function Canvas() {
  return (
    <svg className="block h-[165px] w-full shrink-0 bg-black" role="img" aria-label="Plan view">
      <rect x="416" width="300" height="165" fill="#007af5" />
      <rect x="856" width="140" height="113" fill="#007a00" />
      <rect x="1111" y="8" width="100%" height="157" fill="#007af5" />
      <path d="M616 0v165M416 163h300" stroke="#b0569f" strokeWidth="2" />
      <path d="M565.500 0v113M659.500 0v113M809.500 0v113M925.500 0v113M1025.500 0v113" stroke="#f00000" />
      <line x1="0" x2="100%" y1="113.500" y2="113.500" stroke="#f00000" />

      <path d="M53 68h4v47h-4zM51 78l4-12 4 12z" fill="#0f0" />
      <path d="M55 113h37v4H55zM92 110l13 5-13 5z" fill="#f00" />
      <text x="65" y="78" fontSize="13" fill="#0f0" className="font-['Open_Sans',sans-serif] font-light">Y</text>
      <text x="92" y="104" fontSize="14" fill="#f00" className="font-['Open_Sans',sans-serif] font-light">X</text>

      <g fill="#ff8a1c" className="font-['Noto_Sans_CJK_SC',sans-serif]">
        <text transform="translate(619 -31) rotate(90)" fontSize="42">
          向受力筋
          <tspan fontSize="35" className="font-['DejaVu_Sans_Mono',monospace]">:G10@150</tspan>
        </text>
        <text x="378" y="158" fontSize="42">
          <tspan fill="#fff">横</tspan>向受力筋
          <tspan fontSize="35" className="font-['DejaVu_Sans_Mono',monospace]">:G10@1<tspan fill="#fff">50</tspan></tspan>
        </text>
      </g>
    </svg>
  );
}

function SnapToolbar() {
  return (
    <div className="flex h-8 shrink-0 gap-[2px] py-[2px] pl-px">
      <Bar>
        <Tool icon="ortho" label="正交" />
        <Tool icon="snap" label="对象捕捉" active />
        <Tool icon="dynInput" label="动态输入" />
      </Bar>
      <Bar>
        <Tool icon="cross" label="交点" />
        <Tool icon="perp" label="垂点" active />
        <Tool icon="mid" label="中点" active />
        <Tool icon="vertex" label="顶点" />
        <Tool icon="coord" label="坐标" />
      </Bar>
      <Bar className="text-[#808080]">
        <Combo label="Offset" value="不偏移" className="mr-[3px] w-[58px] text-black" />
        <Sep />
        <span className="mr-1">X=</span>
        <Spin label="X" value="0" className="w-[58px]" />
        <span className="mx-[3px]">mm</span>
        <span className="mr-1">Y=</span>
        <Spin label="Y" value="0" className="w-[58px]" />
        <span className="mx-[3px]">mm</span>
        <Sep />
        <label className="flex items-center gap-2 text-black">
          <input type="checkbox" className="h-[11px] w-[11px] appearance-none border border-[#999] bg-[#f6f6f6]" />
          旋转
        </label>
        <Spin label="Angle" value="0.000" className="mr-[2px] ml-1 w-[68px]" />
        <span>°</span>
      </Bar>
    </div>
  );
}

/* ---------- Rebar table ---------- */

const columns = [
  ["", "w-[34px]"], ["筋号", "w-[73px]"], ["直径(mm)", "w-[57px]"], ["级别", "w-[35px]"], ["图号", "w-[33px]"],
  ["图形", "w-[201px]"], ["计算公式", "w-[166px]"], ["公式描述", "w-[156px]"], ["长度(mm)", "w-[61px]"],
  ["根数", "w-[117px]"], ["搭接", "w-[39px]"], ["损耗(%)", "w-[49px]"], ["单重(kg)", "w-[61px]"], ["总重(kg)", "w-[61px]"],
];

const rebars = [
  { name: "横向底筋.1", count: 2, total: "1.752" },
  { name: "横向底筋.2", count: 9, total: "7.885" },
  { name: "纵向底筋.1", count: 2, total: "1.752" },
  { name: "纵向底筋.2", count: 9, total: "7.885" },
];

const line = "border-r border-b border-[#c0c0c0]";
const cell = clsx(line, "py-0 pr-0 pl-[2px]");

const GradeMark = () => (
  <svg viewBox="0 0 9 10" className="mx-auto h-2.5 w-[9px]" fill="none" stroke="#111" aria-hidden="true">
    <path d="M3.500 0v9M5.500 0v9M1.500 2.500h6l1 2-1 2h-6l-1-2zM1 8.500h7" />
  </svg>
);

function RebarTable() {
  return (
    <table className="w-[1143px] table-fixed border-separate border-spacing-0 whitespace-nowrap">
      <thead>
        <tr className="h-5">
          {columns.map(([title, width], i) => (
            <th
              key={i}
              scope="col"
              className={clsx(
                line,
                "p-0 font-normal",
                width,
                title === "根数"
                  ? "bg-gradient-to-b from-[#fbd8a0] to-[#f0be5c] text-[#5a0a50]"
                  : "bg-gradient-to-b from-white to-[#efefef]"
              )}
            >
              <Fixed>{title}</Fixed>
            </th>
          ))}
        </tr>
      </thead>
      <tbody>
        {rebars.map((r, i) => (
          <tr key={r.name} className="h-[29px] bg-[#ccffdb]">
            <th
              scope="row"
              className={clsx(line, "p-0 pr-2", i === 0 ? "bg-[#ffd48c] text-[#5a0a50]" : "bg-[#f5f5f5] font-normal")}
            >
              <Fixed>{i === 0 ? "1*" : i + 1}</Fixed>
            </th>
            <td className="border-r border-b border-r-black border-b-[#c0c0c0] py-0 pr-0 pl-[2px]"><Fixed>{r.name}</Fixed></td>
            <td className={cell}><Fixed>10</Fixed></td>
            <td className={clsx(line, "p-0 pr-1")}><GradeMark /></td>
            <td className={cell}><Fixed>1</Fixed></td>
            <td className={clsx(line, "p-0 pr-1 pb-1")}>
              <div className="mx-auto w-[150px] border-b-2 border-black text-center leading-3 text-[#f00]">
                <Fixed>1420</Fixed>
              </div>
            </td>
            <td className={cell}><Fixed>1500-40-40</Fixed></td>
            <td className={cell}><Fixed>净长-保护层-保护层</Fixed></td>
            <td className={cell}><Fixed>1420</Fixed></td>
            <td className={clsx(cell, i === 0 && "bg-[#adebdb]")}><Fixed>{r.count}</Fixed></td>
            <td className={cell}><Fixed>0</Fixed></td>
            <td className={cell}><Fixed>0</Fixed></td>
            <td className={cell}><Fixed>0.876</Fixed></td>
            <td className={cell}><Fixed>{r.total}</Fixed></td>
          </tr>
        ))}
        <tr className="h-[19px]">
          <th scope="row" className={clsx(line, "bg-[#f5f5f5] p-0 pr-2 font-normal")}>
            <Fixed>5</Fixed>
          </th>
          {columns.slice(1).map(([title]) => (
            <td key={title} className={clsx("border-r border-b border-b-[#c0c0c0] p-0", title === "筋号" ? "border-r-black" : "border-r-[#c0c0c0]")} />
          ))}
        </tr>
      </tbody>
    </table>
  );
}

function RebarPanel() {
  return (
    <section className="relative flex min-h-0 flex-1 pt-[2px] pb-0.5">
      <div className="flex w-3 shrink-0 flex-col items-start">
        <button type="button" aria-label="Close editor" className="ml-px h-[11px] w-[11px] shrink-0 border border-[#555] border-t-[#b33]">
          <X size={9} strokeWidth={3.5} />
        </button>
        <div className="mt-1 ml-px w-2 flex-1 bg-[radial-gradient(circle,#b0b0b0_1px,transparent_1px)] bg-[length:4px_5px]" />
      </div>
      <div className="flex min-w-0 flex-1 flex-col pr-[2px]">
        <div className="flex h-[26px] shrink-0 items-center bg-gradient-to-b from-[#fdfdfd] to-[#f1f1f1] pl-[2px]">
          {["first", "prev", "next", "last", "sep", "up", "down", "sep2"].map((n) =>
            n.startsWith("sep") ? (
              <Sep key={n} />
            ) : (
              <button key={n} type="button" aria-label={n} className="flex w-[23px] shrink-0 justify-center">
                <Icon name={n} />
              </button>
            )
          )}
          <Tool icon="insert" label="插入" disabled />
          <Tool icon="remove" label="删除" disabled />
          <Tool icon="scaleBar" label="缩尺配筋" />
          <Tool icon="barInfo" label="钢筋信息" />
          <Tool icon="barLib" label="钢筋图库" />
          <Tool icon="other" label="其他" caret="menu" />
          <Tool label="关闭" />
          <div className="flex items-center gap-1 pl-1 whitespace-nowrap">
            <Sep />
            单构件钢筋总重(kg)：19.275
          </div>
        </div>
        <div className="flex min-h-0 flex-1 flex-col border border-[#a0a0a0] bg-white">
          <div className="min-h-0 flex-1 overflow-hidden">
            <RebarTable />
          </div>
          <div className="mb-px flex h-[15px] shrink-0 items-center bg-[#f0f0f0]">
            <ChevronLeft size={13} strokeWidth={3} className="mx-[2px] shrink-0 text-[#555]" />
            <div className="h-full w-[59%] bg-[#cdcdcd]" />
            <ChevronRight size={13} strokeWidth={3} className="mr-[2px] ml-auto shrink-0 text-[#555]" />
          </div>
        </div>
      </div>
      <div className="pointer-events-none absolute top-[2px] left-[736px] h-[212px] w-[150px] border-3 border-[#0000fa]" />
    </section>
  );
}

/* ---------- Status bar and taskbar ---------- */

function StatusBar() {
  const box = "flex h-full shrink-0 items-center border border-[#d4d4d4] bg-[#f7f7f7] pl-px";
  return (
    <footer className="flex h-5 shrink-0 gap-[2px] whitespace-pre">
      <span className={clsx(box, "w-[148px]")}><Fixed>X=87530 Y=2568</Fixed></span>
      <span className={clsx(box, "w-[78px]")}><Fixed>层高:2.15m</Fixed></span>
      <span className={clsx(box, "w-[98px]")}><Fixed>底标高:-2.2m</Fixed></span>
      <span className={clsx(box, "w-[48px]")}><Fixed>1(1)</Fixed></span>
      <span className={clsx(box, "flex-1")}>按鼠标左键指定第一个角点，或拾取构件图元</span>
      <span className={clsx(box, "w-[70px]")}><Fixed>1189.9 FPS</Fixed></span>
    </footer>
  );
}

const ieMark = (ring, fill) => (
  <>
    <path d="M6.500 13h14c0-9-14-9-14 0 0 7 9 8 12.500 4" fill="none" stroke={fill} strokeWidth="3.600" />
    <path d="M5 22C-3 22 9 2 20 2c3 0 3 3 1 6" fill="none" stroke={ring} strokeWidth="1.600" />
  </>
);

const apps = [
  {
    name: "Pinwheel",
    art: (
      <>
        <g fill="#e8e8e8">
          <rect x="0" y="2" width="11" height="10" rx="5" />
          <rect x="12" y="0" width="10" height="11" rx="5" />
          <rect x="13" y="12" width="11" height="10" rx="5" />
          <rect x="2" y="13" width="10" height="11" rx="5" />
          <circle cx="12" cy="12" r="4" />
        </g>
        <path d="M12 12C12 8 9 6 5 7M12 12c4 0 6-3 5-7M12 12c0 4 3 6 7 5M12 12c-4 0-6 3-5 7" fill="none" stroke="#02090d" strokeWidth="1.300" />
      </>
    ),
  },
  { name: "Browser", art: ieMark("#e8e8e8", "#e8e8e8") },
  {
    name: "Alerts",
    art: (
      <>
        <path d="M16 9c-2-3-8-1-7 3 1 5 9 3 8-1-1-3-6-2-5 1M19 14c-1 8-14 9-16 1C1 7 9 2 14 5M17 20c-4 3-10 2-12-2" fill="none" stroke="#e0e0e0" strokeWidth="1.500" />
        <path d="M19-3c4 0 4 3 4 7l2 4H13l2-4c0-4 0-7 4-7z" fill="#f0ad10" />
      </>
    ),
  },
  {
    name: "Edge",
    art: (
      <path
        d="M2 11C4-1 22-1 22 12v2H9c0 5 7 5 12 3v4C13 25 5 21 5 14c0-3 2-5 4-6-4 0-6 1-7 3zM9 10.500h8c0-5-7-5-8 0z"
        fill="#0a78d7"
        fillRule="evenodd"
      />
    ),
  },
  { name: "Internet Explorer", art: ieMark("#f6c62c", "#4db2ee") },
  {
    name: "Explorer",
    run: true,
    art: (
      <>
        <path d="M1 3h8l2 2h12v16H1z" fill="#f3ce66" />
        <path d="M1 8h22v13H1z" fill="#ffe596" />
        <path d="M5 21v-7h14v7h-4v-3H9v3z" fill="#3aa5e8" />
      </>
    ),
  },
  {
    name: "360",
    run: true,
    art: (
      <>
        <circle cx="12" cy="12" r="10.500" fill="#45b52c" />
        <path d="M7.500 12.500h9c0-6-9-6-9 0 0 5 6 5.500 8.500 3" fill="none" stroke="#fff" strokeWidth="2.600" />
        <path d="M3 21C0 16 11 4 22 4" fill="none" stroke="#d6f7bf" strokeWidth="1.500" />
      </>
    ),
  },
  {
    name: "Notes",
    run: true,
    art: (
      <>
        <rect x="0" y="0" width="24" height="24" rx="2" fill="#f58a10" />
        <path d="M4 4h15v16H4z" fill="#fff3d8" />
        <path d="M6 8h8M6 11h7M6 14h5" stroke="#b97a3a" />
        <path d="M22 1l-9 14-2 4 4-3 8-13z" fill="#d8551a" stroke="#7a2b0a" strokeWidth=".8" />
      </>
    ),
  },
  {
    name: "GGJ2013",
    run: true,
    current: true,
    art: (
      <>
        <rect width="24" height="24" rx="4" fill="#1595f2" />
        <path d="M16 7.500C15.500 4 11.500 4 11.500 8v8c0 3 3 3 5 1.500M4.500 16C4 13 5 11.500 7.500 11.500h9c2.500 0 3.500-1.500 3-3.500" fill="none" stroke="#fff" strokeWidth="2" />
      </>
    ),
  },
  {
    name: "Glodon",
    run: true,
    art: <path d="M24 2c-2 4-5 5-8 5-8-2-11 3-9 8 2 4 9 4 10 0h-5v-4h10c1 8-4 13-11 13C2 24-1 15 2 8 6 1 15 3 24 2z" fill="#1a9ff0" />,
  },
];

function Taskbar() {
  return (
    <div className="flex h-10 shrink-0 items-center bg-[#02090d] text-[#f2f2f2]">
      <button type="button" aria-label="Start" className="flex h-full w-12 shrink-0 items-center justify-center bg-black">
        <svg viewBox="0 0 16 16" className="h-4 w-4" fill="#fff">
          <path d="M0 2.300L7 1.300v6.200H0zM8 1.100L16 0v7.500H8zM0 8.500h7v6.200L0 13.700zM8 8.500h8V16l-8-1.100z" />
        </svg>
      </button>
      <label className="flex h-full w-[344px] shrink-0 items-center bg-[#333] pr-3.5 pl-2">
        <svg viewBox="0 0 22 22" className="h-[22px] w-[22px] shrink-0" fill="none" stroke="#fff" strokeWidth="2.500">
          <circle cx="11" cy="11" r="9" />
        </svg>
        <input
          aria-label="Search"
          placeholder="在这里输入你要搜索的内容"
          className="ml-1.5 min-w-0 flex-1 bg-transparent text-[14px] outline-none placeholder:text-[#9a9a9a]"
        />
        <svg viewBox="0 0 12 16" className="h-4 w-3" fill="none" stroke="#aaa">
          <rect x="3.500" y=".5" width="5" height="10" />
          <path d="M1 8v5h10V8M6 13v3M3 15.500h6" />
        </svg>
      </label>
      <button type="button" aria-label="Task view" className="flex w-12 shrink-0 justify-center">
        <svg viewBox="0 0 20 16" className="h-4 w-5" fill="none" stroke="#fff">
          <path d="M4.500 1.500h11v13h-11zM2.500 2.500h-2v11h2M17.500 2.500h2v11h-2" />
        </svg>
      </button>
      {apps.map((a, i) => (
        <button
          key={a.name}
          type="button"
          aria-label={a.name}
          className={clsx(
            "flex h-full shrink-0 flex-col items-center justify-between pt-2",
            i < 3 ? "w-[52px]" : "w-[45px]",
            a.current && "bg-[#343c40]"
          )}
        >
          <svg viewBox="0 0 24 24" className={clsx("overflow-visible", i < 3 || a.name === "Explorer" ? "h-[22px] w-[22px]" : "h-6 w-6")}>
            {a.art}
          </svg>
          <span className={clsx("h-[2px]", a.current ? "w-full" : "w-9", a.run && "bg-[#76b9ed]")} />
        </button>
      ))}
      <span className="ml-3 shrink-0">链接</span>
      <div className="ml-5 w-[50px] shrink-0 text-center leading-[17px] whitespace-nowrap">
        <p>11%</p>
        <p>CPU使用</p>
      </div>
      <div className="ml-auto flex shrink-0 items-center">
        <div className="flex w-[196px] items-center justify-between">
          <ChevronUp size={16} strokeWidth={1.500} />
          <svg viewBox="0 0 16 16" className="h-4 w-4" fill="#fff">
            <path d="M8 1c4 0 4 4 4 7l2 4H2l2-4c0-3 0-7 4-7zM6 13h4c0 3-4 3-4 0z" />
          </svg>
          <svg viewBox="0 0 18 14" className="h-3.5 w-[18px]" fill="none" stroke="#fff">
            <path d="M5.500 4.500h10v7h-9M16 6.500h1.500v3H16M.500 2h6v3h-6zM2 0v2M5 0v2M3.500 5v6H6" />
            <path d="M8 6h6v4H8z" fill="#fff" />
          </svg>
          <svg viewBox="0 0 14 14" className="h-3.5 w-3.5" fill="none" stroke="#ddd">
            <path d="M1 13C1 6 6 1 13 1M4 13c0-5 4-9 9-9M7 13c0-3 3-6 6-6M10 13c0-2 1-3 3-3" />
          </svg>
          <svg viewBox="0 0 17 14" className="h-3.5 w-[17px]" fill="none" stroke="#fff">
            <path d="M1 5h3l4-4v12L4 9H1zM10 5c1 1 1 3 0 4M12 3c2 2 2 6 0 8" />
            <path d="M14 1c3 3 3 9 0 12" stroke="#666" />
          </svg>
          <svg viewBox="0 0 23 13" className="h-[13px] w-[23px]" fill="none" stroke="#fff">
            <path d="M.500.500h22v12H.500z" />
            <path d="M3 3.500h17M3 6.500h17" strokeDasharray="2 1" />
            <path d="M5 9.500h13" />
          </svg>
          <span className="text-[13px]">中</span>
          <svg viewBox="0 0 16 16" className="h-4 w-4">
            <rect x="1" y="1" width="14" height="14" rx="2" fill="#f04e23" transform="rotate(-6 8 8)" />
            <path d="M12 4c-4-1-8 0-7 2 0 2 6 1 6 4-1 2-4 1-7 1" fill="none" stroke="#fff" strokeWidth="2" />
          </svg>
        </div>
        <div className="ml-3 w-[72px] text-center leading-[18px]">
          <p>10:30</p>
          <p>2018/7/19</p>
        </div>
        <button type="button" aria-label="Action center" className="mr-5 ml-3 flex w-4 justify-center">
          <svg viewBox="0 0 16 16" className="h-4 w-4" fill="none" stroke="#fff">
            <path d="M.500 1.500h15v10h-5l-2.500 3-2.500-3h-5z" />
          </svg>
        </button>
        <span className="mr-1 h-10 w-px bg-[#555]" />
      </div>
    </div>
  );
}

export default function App() {
  return (
    <div className={clsx("relative flex h-screen flex-col overflow-hidden bg-[#f0f0f0] text-[12px] leading-4 text-black", UI)}>
      <TitleBar />
      <InputMethodBar />
      <MenuBar />
      <MainToolbar />
      <div className="flex min-h-0 flex-1 gap-[5px] pt-[2px] pb-px">
        <Navigator />
        <main className="flex min-w-0 flex-1 flex-col">
          <EditToolbars />
          <Canvas />
          <SnapToolbar />
          <RebarPanel />
        </main>
      </div>
      <StatusBar />
      <Taskbar />
    </div>
  );
}
